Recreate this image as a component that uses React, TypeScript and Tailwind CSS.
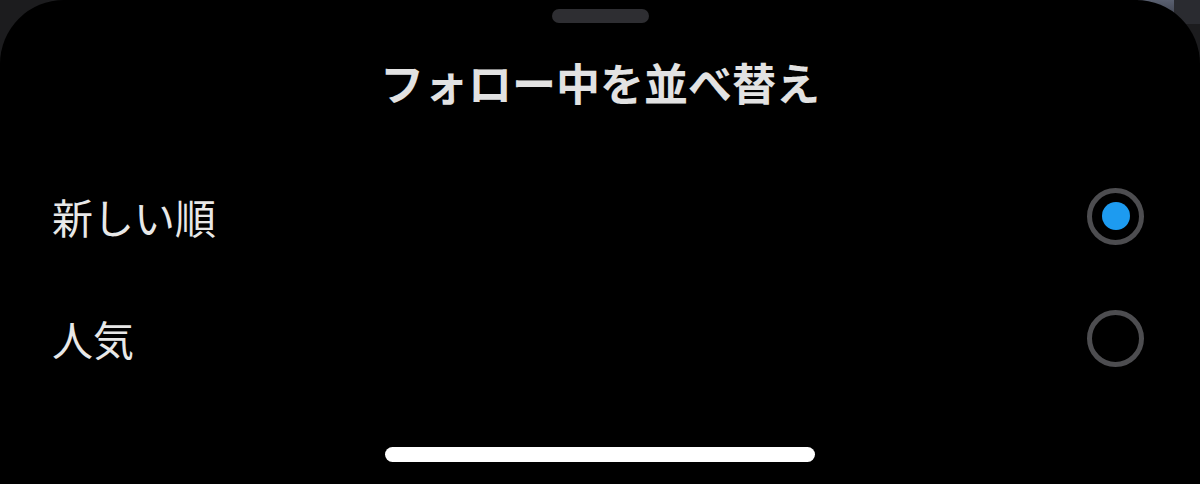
import React, { useState } from "react";

const options = [
  { id: "recent", label: "新しい順" },
  { id: "popular", label: "人気" },
];

const Radio = ({ checked }: { checked: boolean }) => (
  <span className="flex h-[57px] w-[57px] items-center justify-center rounded-full border-[5px] border-[#4d4d50]">
    {checked && <span className="h-[28px] w-[28px] rounded-full bg-[#1d9bf0]" />}
  </span>
);

const App = () => {
  const [selected, setSelected] = useState("recent");

  return (
    <div
      className="relative h-[484px] w-[1200px] overflow-hidden bg-[#1c1c1e]"
      style={{ fontFamily: '"Noto Sans CJK JP", "Noto Sans", sans-serif' }}
    >
      {/* bit of the page peeking behind the sheet corner */}
      <div className="absolute right-[26px] top-0 h-[20px] w-[36px] bg-gradient-to-b from-[#5a6070] to-[#3a3e4a]" />
      <div className="absolute right-0 top-0 h-[24px] w-[26px] bg-[#2a2b30]" />

      <div className="relative flex h-full flex-col items-center rounded-t-[64px] bg-black pt-[9px]">
        <div className="h-[14px] w-[97px] rounded-full bg-[#2e2e32]" />

        <h1 className="mt-[29px] flex h-[60px] items-center text-[44px] font-bold leading-none text-[#e2e2e2]">
          フォロー中を並べ替え
        </h1>

        <div className="mt-[43px] w-full">
          {options.map((o) => (
            <button
              key={o.id}
              onClick={() => setSelected(o.id)}
              className="flex h-[122px] w-full items-center justify-between pl-[52px] pr-[56px] text-left"
            >
              <span className="text-[41px] leading-none text-[#e8e8e8]">{o.label}</span>
              <Radio checked={selected === o.id} />
            </button>
          ))}
        </div>

        {/* home indicator */}
        <div className="mt-[48px] h-[15px] w-[430px] rounded-full bg-white" />
      </div>
    </div>
  );
};

export default App;
